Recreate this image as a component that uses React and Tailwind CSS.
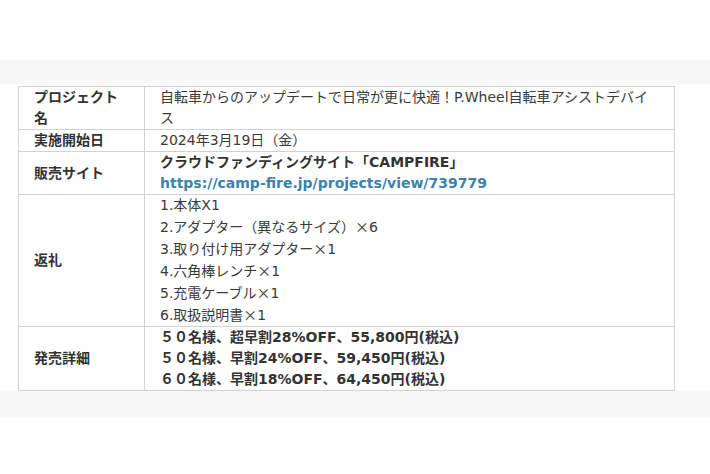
const ROWS = [
	{
		label: "プロジェクト名",
		lines: ["自転車からのアップデートで日常が更に快適！P.Wheel自転車アシストデバイス"],
	},
	{ label: "実施開始日", lines: ["2024年3月19日（金）"] },
	{ label: "販売サイト", site: true },
	{
		label: "返礼",
		lines: [
			"1.本体X1",
			"2.アダプター（異なるサイズ）×6",
			"3.取り付け用アダプター×1",
			"4.六角棒レンチ×1",
			"5.充電ケーブル×1",
			"6.取扱説明書×1",
		],
	},
	{
		label: "発売詳細",
		bold: true,
		lines: [
			"５０名様、超早割28%OFF、55,800円(税込)",
			"５０名様、早割24%OFF、59,450円(税込)",
			"６０名様、早割18%OFF、64,450円(税込)",
		],
	},
];

// the × sign is drawn full width, as the CJK font does it
const Line = ({ text }) => {
	const parts = text.split("×");
	return (
		<div>
			{parts.map((part, i) => (
				<span key={i}>
					{i > 0 && (
						<span style={{ fontFamily: '"Noto Sans CJK JP", sans-serif' }}>×</span>
					)}
					{part}
				</span>
			))}
		</div>
	);
};

const App = () => {
	return (
		<div
			className="min-h-[474px] w-[710px] bg-white pt-[60px] text-[14px] leading-[21px] text-[#3a3a3a]"
			style={{ fontFamily: '"DejaVu Sans", "Noto Sans CJK JP", sans-serif' }}
		>
			<div className="h-[24px] bg-[#f7f7f8]" />
			<div className="px-[18px] pt-[2px]">
				<table className="w-[657px] table-fixed border-collapse border border-[#d2d2d2]">
					<colgroup>
						<col className="w-[126px]" />
						<col />
					</colgroup>
					<tbody>
						{ROWS.map((row) => (
							<tr key={row.label}>
								<td className="border border-[#d2d2d2] px-[15px] py-0 align-middle font-bold text-[#333]">
									{row.label}
								</td>
								<td
									className={`border border-[#d2d2d2] py-0 pl-[15px] pr-[16px] align-middle ${row.bold ? "font-bold text-[#333]" : ""}`}
								>
									{row.site ? (
										<>
											<div className="font-bold text-[#333]">
												クラウドファンディングサイト「CAMPFIRE」
											</div>
											<div className="font-bold text-[#3b82ad]">
												https://camp-fire.jp/projects/view/739779
											</div>
										</>
									) : (
										row.lines.map((line) => <Line key={line} text={line} />)
									)}
								</td>
							</tr>
						))}
					</tbody>
				</table>
			</div>
			<div className="h-[26px] bg-[#f7f7f8]" />
		</div>
	);
};

export default App;
